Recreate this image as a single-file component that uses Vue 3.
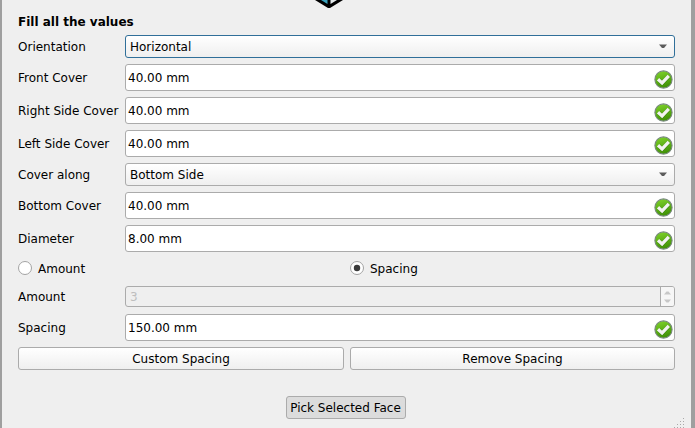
<script setup>
import { ref } from 'vue'

const rows = [
  { label: 'Orientation', value: 'Horizontal', kind: 'combo', focused: true },
  { label: 'Front Cover', value: '40.00 mm', kind: 'edit' },
  { label: 'Right Side Cover', value: '40.00 mm', kind: 'edit' },
  { label: 'Left Side Cover', value: '40.00 mm', kind: 'edit' },
  { label: 'Cover along', value: 'Bottom Side', kind: 'combo' },
  { label: 'Bottom Cover', value: '40.00 mm', kind: 'edit' },
  { label: 'Diameter', value: '8.00 mm', kind: 'edit' },
  { kind: 'radios' },
  { label: 'Amount', value: '3', kind: 'spin' },
  { label: 'Spacing', value: '150.00 mm', kind: 'edit' },
]
const mode = ref('Spacing')
</script>

<template>
  <main class="window">
    <header class="logo">
      <svg width="28" height="9" viewBox="0 0 28 9">
        <path d="M0 0H28L15 8H13Z" fill="#000" />
        <path d="M6 0H12.500V4Z" fill="#3ba3be" />
        <path d="M15.500 0H22L15.500 4Z" fill="#e4eaec" />
      </svg>
    </header>
    <h1>Fill all the values</h1>
    <div class="form">
      <div v-for="(row, i) in rows" :key="i" class="row" :class="row.kind">
        <template v-if="row.kind === 'radios'">
          <label v-for="m in ['Amount', 'Spacing']" :key="m" class="radio" @click="mode = m">
            <svg width="14" height="14" viewBox="0 0 14 14">
              <circle cx="7" cy="7" r="6.500" fill="#fff" stroke="#a3a3a3" />
              <circle v-if="mode === m" cx="7" cy="7" r="3.200" fill="#3a3a3a" />
            </svg>
            <span>{{ m }}</span>
          </label>
        </template>
        <template v-else>
          <span class="label">{{ row.label }}</span>
          <div class="field" :class="{ focused: row.focused }">
            <span class="value">{{ row.value }}</span>
            <svg v-if="row.kind === 'combo'" class="arrow" width="8" height="5" viewBox="0 0 8 5">
              <path d="M0 .5H8L5 4H3Z" fill="#5c5c5c" />
            </svg>
            <svg v-else-if="row.kind === 'edit'" class="check" width="19" height="19" viewBox="0 0 19 19">
              <defs>
                <linearGradient :id="'g' + i" x1="0" y1="0" x2="0.3" y2="1">
                  <stop offset="0" stop-color="#83d72d" />
                  <stop offset="1" stop-color="#429307" />
                </linearGradient>
              </defs>
              <circle cx="9.500" cy="9.500" r="8.600" :fill="`url(#g${i})`" stroke="#77897c" stroke-width="1.100" />
              <path d="M4.700 9.900L8.200 13.200L14.500 6.500" fill="none" stroke="#368009" stroke-width="4" />
              <path d="M4 9.200L8.100 13L14.800 5.900" fill="none" stroke="#f3f3f1" stroke-width="3.300" />
            </svg>
            <span v-else class="stepper">
              <svg width="14" height="19" viewBox="0 0 14 19">
                <path d="M3 7.500L5.500 4.500H7.500L10 7.500Z M3 12.500H10L7.500 15.500H5.500Z" fill="#c7c7c7" />
              </svg>
            </span>
          </div>
        </template>
      </div>
    </div>
    <div class="actions">
      <button>Custom Spacing</button>
      <button>Remove Spacing</button>
    </div>
    <div class="pick"><button>Pick Selected Face</button></div>
    <svg class="grip" width="11" height="11" viewBox="0 0 11 11">
      <path d="M9 0h1v1h-1z M6 3h1v1h-1z M9 3h1v1h-1z M3 6h1v1h-1z M6 6h1v1h-1z M9 6h1v1h-1z M0 9h1v1h-1z M3 9h1v1h-1z M6 9h1v1h-1z M9 9h1v1h-1z" fill="#a9a9a9" />
    </svg>
  </main>
</template>

<style>
body { background: #efefef; overflow: hidden; }
</style>

<style scoped>
* { box-sizing: border-box; }
.window {
  position: relative;
  height: 428px;
  padding: 0 16px;
  border-left: 2px solid #9f9f9f;
  border-right: 4px solid #9f9f9f;
  background: #efefef;
  color: #000;
  font: 12px/15px "DejaVu Sans", sans-serif;
}
.logo { height: 15px; padding-left: 297px; }
.logo svg { display: block; }
h1 { margin: 0; height: 20px; font-size: 12px; line-height: 15px; }
.form { display: flex; flex-direction: column; gap: 6px; }
.row { display: flex; height: 27px; align-items: center; }
.combo { height: 23px; }
.spin { height: 22px; align-items: flex-start; }
.radios { height: 22px; align-items: flex-start; }
.label { width: 107px; flex: none; padding-top: 2px; white-space: nowrap; }
.spin .label { padding-top: 4px; }
.field {
  display: flex;
  align-items: center;
  flex: 1;
  height: 100%;
  border: 1px solid #ababab;
  border-radius: 3px;
  background: #fff;
  padding: 0 1px 0 2px;
}
.value { flex: 1; padding-top: 2px; }
.combo .field { background: linear-gradient(#fff, #efefef); padding: 0 7px 0 4px; }
.combo .focused { border-color: #306f99; }
.check { margin-top: 3px; }
.spin .field { height: 21px; background: #efefef; color: #bebebe; padding: 0 0 0 4px; }
.stepper { width: 14px; height: 19px; border-left: 1px solid #ababab; background: #f6f6f6; border-radius: 0 2px 2px 0; }
.stepper svg { display: block; }
.radio { display: flex; flex: none; align-items: center; gap: 6px; width: 332px; height: 20px; }
.radio span { padding-top: 2px; }
.actions { display: grid; grid-template-columns: 326px 325px; gap: 6px; margin-top: 6px; }
button {
  height: 23px;
  padding: 2px 0 0;
  border: 1px solid #ababab;
  border-radius: 3px;
  background: linear-gradient(#fff, #efefef);
  color: #000;
  font: inherit;
}
.pick { display: flex; padding: 26px 0 0 268px; }
.pick button { width: 120px; padding-right: 1px; background: #dcdcdc; }
.grip { position: absolute; right: 6px; bottom: -1px; }
</style>
